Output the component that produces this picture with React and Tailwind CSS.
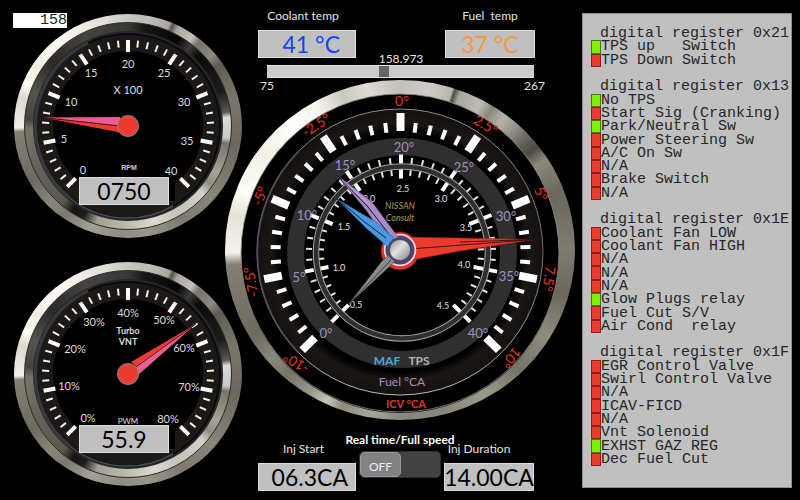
import React from "react";

const LATO = "font-['Lato','Open_Sans',sans-serif]";

const polar = (r, deg) => {
  const a = (deg * Math.PI) / 180;
  return [r * Math.sin(a), -r * Math.cos(a)];
};

/* Tick marks over a 270 degree sweep: 8 major steps, 5 minor divisions each. */
function Ticks({ cx = 0, cy = 0, major, minor, majorWidth, minorWidth, minorColor = "#f4f2ec" }) {
  const marks = [];
  for (let i = 0; i <= 40; i++) {
    const isMajor = i % 5 === 0;
    const [from, to] = isMajor ? major : minor;
    const deg = -135 + i * 6.75;
    const [x1, y1] = polar(from, deg);
    const [x2, y2] = polar(to, deg);
    marks.push(
      <line
        key={i}
        x1={cx + x1}
        y1={cy + y1}
        x2={cx + x2}
        y2={cy + y2}
        stroke={isMajor ? "#ffffff" : minorColor}
        strokeWidth={isMajor ? majorWidth : minorWidth}
      />
    );
  }
  return <g>{marks}</g>;
}

function Labels({ items, size, fill }) {
  return (
    <g fontSize={size} fill={fill} textAnchor="middle">
      {items.map(([text, x, y, turn]) => (
        <text key={text} transform={`translate(${x} ${y}) rotate(${turn || 0})`} y={size * 0.36}>
          {text}
        </text>
      ))}
    </g>
  );
}

function Readout({ label, value, className }) {
  return (
    <output
      aria-label={label}
      className={`flex h-7 items-center border border-[#dcdcdc] bg-[#c0c0c0] text-[23px] leading-none whitespace-nowrap ${className}`}
    >
      {value}
    </output>
  );
}

function SmallGauge({ name, value, labels, needle, children }) {
  return (
    <section aria-label={name} className="relative h-[224px] w-[228px]">
      <div className="h-full rounded-[50%] bg-[conic-gradient(#c9c7c1,#b9b6b0_16deg,#a9a6a0_22deg,#55524c_24deg,#aaa7a0_27deg,#c4c1ba_36deg,#77736b_40deg,#8e8a82_50deg,#605c54_56deg,#7a766c_75deg,#6b675d_100deg,#8a867b_130deg,#7e7a70_150deg,#99968b_170deg,#8f8c82_185deg,#a5a297_200deg,#7c786e_215deg,#8b877c_225deg,#6d695f_240deg,#858177_267deg,#f2f0e6_269deg,#dad7cc_285deg,#fffff6_292deg,#efede2_303deg,#fffff8_318deg,#f1efe6_332deg,#e0ded6_348deg,#c9c7c1)] px-[10px] py-2">
        <div className="h-full rounded-[50%] border border-[#2c2a26] bg-[conic-gradient(#3a3936,#161614_10deg,#050505_30deg,#3b3a37_38deg,#0b0b0a_45deg,#1d1c1a_70deg,#5b5953_82deg,#dcdcdc_85deg,#c6c6c6_97deg,#77746b_100deg,#a8a498_118deg,#8f8c82_125deg,#d4d2c8_132deg,#c5c2b7_150deg,#dddbd1_165deg,#bfbcb1_180deg,#a19e93_198deg,#1f1e1a_206deg,#14130f_213deg,#5a564c_220deg,#66625a_245deg,#77746a_268deg,#45433e_274deg,#55534d_290deg,#2b2a27_310deg,#45443f_335deg,#3a3936)] p-2">
          <div className="h-full rounded-[50%] border-2 border-[#26272b] bg-[#0c0b0b]" />
        </div>
      </div>
      <svg viewBox="-114 -112 228 224" className="absolute inset-0 h-full w-full" aria-hidden="true">
        <circle r="91" fill="#1d1917" />
        <path d="M-58 72A92 92 0 0 1 -40 -83" fill="none" stroke="#42434c" strokeWidth="3" opacity="0.8" />
        <path d="M-58 72A92 92 0 0 0 45 80" fill="none" stroke="#4a4b55" strokeWidth="1.5" />
        <circle r="75" fill="#000" />
        <rect x="30" y="53" width="17" height="22" fill="#000" />
        <Ticks major={[86, 74]} minor={[86, 79]} majorWidth="4" minorWidth="2" />
        <Labels items={labels} size={11} fill="#dedede" />
        {children}
        {needle}
        <circle r="10.5" fill="#e93b2e" stroke="#8d8d8d" strokeWidth="1" />
      </svg>
      <Readout
        label={name}
        value={value}
        className="absolute top-[163px] left-[65px] w-[90px] justify-center text-black"
      />
    </section>
  );
}

function MainDial() {
  return (
    <section
      aria-label="Injection dial"
      className="relative -mt-[13px] h-[340px] w-[350px] rounded-[50%] bg-[conic-gradient(#c3c1ba,#cfcdc6_10deg,#b8b6af_18deg,#4e4c46_19deg,#a9a69f_21deg,#bdbab2_29deg,#8a877f_33deg,#b5b2a9_38deg,#9c998f_42deg,#5d5a50_50deg,#4c493f_53deg,#8b887e_58deg,#6b675d_70deg,#7f7b70_90deg,#6b675c_105deg,#8f8b7f_120deg,#77736a_135deg,#9c998d_150deg,#88857a_165deg,#8b887d_180deg,#a8a599_190deg,#8e8b80_200deg,#c4c2ba_206deg,#9b988c_212deg,#77736a_222deg,#8b877c_230deg,#6d695f_240deg,#857f75_265deg,#f4f2ea_269deg,#e4e2d8_282deg,#fffff6_290deg,#f2f0e6_305deg,#fffff8_318deg,#f6f4ec_330deg,#c9c7bf_340deg,#dddbd4_348deg,#c3c1ba)] px-4 pt-[14px] pb-[7px]"
    >
      <div className="h-full rounded-[50%] bg-black" />
      <svg viewBox="-175 -170 350 340" className="absolute inset-0 h-full w-full" aria-hidden="true">
        <defs>
          <linearGradient id="rim" x1="0" y1="0" x2="0" y2="1">
            <stop offset="0" stopColor="#8b8b8b" />
            <stop offset="0.5" stopColor="#6d6d75" />
            <stop offset="1" stopColor="#b9b9c2" />
          </linearGradient>
          <radialGradient id="well">
            <stop offset="0.8" stopColor="#000" />
            <stop offset="0.86" stopColor="#0a0807" />
            <stop offset="0.9" stopColor="#1b1614" />
            <stop offset="1" stopColor="#15110f" />
          </radialGradient>
          <linearGradient id="cap" x1="0" y1="0" x2="1" y2="1">
            <stop offset="0" stopColor="#8d8d8d" />
            <stop offset="0.45" stopColor="#e2e2e2" />
            <stop offset="0.6" stopColor="#c4c4c4" />
            <stop offset="1" stopColor="#808080" />
          </linearGradient>
        </defs>
        <circle cy="3" r="159" fill="none" stroke="#8c8c86" strokeWidth="0.8" />
        <circle cy="2" r="143" fill="url(#well)" stroke="url(#rim)" strokeWidth="1" />
        <path d="M-101 -99A143 143 0 0 0 -101 103" fill="none" stroke="#4d4d57" strokeWidth="2" opacity="0.7" />
        <circle cx="1" cy="3" r="120" fill="#000" />
        <circle cx="2" cy="3" r="106.5" fill="none" stroke="#2f2f2f" strokeWidth="17" />
        <Ticks cx={0.5} cy={2} major={[139, 121]} minor={[130, 120]} majorWidth="8" minorWidth="4" minorColor="#fff" />
        <Ticks cx={1} cy={2.5} major={[98, 89]} minor={[95, 89]} majorWidth="4" minorWidth="2" minorColor="#e9e6d6" />
        <Ticks cx={1} cy={2.5} major={[84, 74]} minor={[83, 77]} majorWidth="4" minorWidth="2" minorColor="#e9e6d6" />
        <circle cx="2" cy="2.5" r="86" fill="none" stroke="#a5a5a5" strokeWidth="6.5" />
        <circle cx="2" cy="2.5" r="86" fill="none" stroke="#2f2f2f" strokeWidth="4.5" />
        <Labels
          size={14}
          fill="#e0352b"
          items={[
            ["0°", 2, -149],
            ["-2.5°", -84, -125, -33],
            ["2.5°", 86, -125, 30],
            ["-5°", -140, -54, -68],
            ["5°", 141, -56, 67],
            ["-7.5°", -149, 32, -100],
            ["7.5°", 149, 29, 98],
            ["-10°", -104, 113, -148],
            ["10°", 111, 108, 130],
          ]}
        />
        <Labels
          size={13}
          fill="#a18fbd"
          items={[
            ["0°", -74, 83],
            ["5°", -101, 27],
            ["10°", -93, -35],
            ["15°", -55, -85],
            ["20°", 4, -103],
            ["25°", 64, -83],
            ["30°", 106, -34],
            ["35°", 109, 26],
            ["40°", 78, 83],
          ]}
        />
        <Labels
          size={9}
          fill="#e2e2e2"
          items={[
            ["0.5", -44, 55],
            ["1.0", -61, 18],
            ["1.5", -56, -23],
            ["2.0", -31, -51],
            ["2.5", 3, -61],
            ["3.0", 41, -51],
            ["3.5", 66, -22],
            ["4.0", 64, 15],
            ["4.5", 43, 56],
          ]}
        />
        <g fontSize="9" fontStyle="italic" fill="#a89f63" textAnchor="middle">
          <text x="0" y="-41">NISSAN</text>
          <text x="0" y="-29">Consult</text>
        </g>
        <g textAnchor="middle" fontSize="12">
          <text x="-13" y="115" fontWeight="bold" fill="#45a9e6">MAF</text>
          <text x="19" y="115" fontWeight="bold" fill="#b4b4b4">TPS</text>
          <text x="2" y="136" fill="#a18fbd">Fuel °CA</text>
          <text x="6" y="158" fontWeight="bold" fontSize="11" fill="#e0352b">ICV °CA</text>
        </g>

        <circle r="19" cy="1" fill="#d8362c" stroke="#7a1713" strokeWidth="0.8" />
        <path d="M8 -13L60 -12L135 -10.5L60 1L12 10Z" fill="#e93b2e" stroke="#8e1c15" strokeWidth="0.6" />
        <path d="M16 -1.5L135 -10.5L60 -8" fill="none" stroke="#3a0a08" strokeWidth="0.9" />
        <circle r="15" fill="none" stroke="#f3dada" strokeWidth="2.5" />
        <circle r="13.5" fill="none" stroke="#5a3a7c" strokeWidth="2" />
        <path d="M-63 -75L-28 -48L-2 -13L-11 -7L-34 -40Z" fill="#a88cc4" stroke="#6a4f88" strokeWidth="0.6" />
        <path d="M-63 -75L-32 -43L-8 -12" fill="none" stroke="#1d1228" strokeWidth="1" />
        <path d="M-58 -70L-30 -45" stroke="#e3d8ee" strokeWidth="0.6" />
        <path d="M-63 -51L-24 -28L-6 -12L-12 -3L-34 -22Z" fill="#4a97e0" stroke="#245a94" strokeWidth="0.6" />
        <path d="M-63 -51L-34 -27L-14 -12" fill="none" stroke="#0a2440" strokeWidth="1" />
        <path d="M-52 55L-18 11L-10 4L-4 10L-11 17Z" fill="#8b8b8b" stroke="#454545" strokeWidth="0.6" />
        <path d="M-52 55L-9 10" stroke="#2b2b2b" strokeWidth="0.9" />
        <circle r="12.5" fill="#3b4668" />
        <circle r="10.5" fill="url(#cap)" stroke="#4b4b4b" strokeWidth="0.8" />
      </svg>
    </section>
  );
}

const REGISTERS = [
  {
    title: "digital register 0x21",
    bits: [["TPS up   Switch", 1], ["TPS Down Switch", 0]],
  },
  {
    title: "digital register 0x13",
    bits: [
      ["No TPS", 1],
      ["Start Sig (Cranking)", 0],
      ["Park/Neutral Sw", 1],
      ["Power Steering Sw", 0],
      ["A/C On Sw", 0],
      ["N/A", 0],
      ["Brake Switch", 0],
      ["N/A", 0],
    ],
  },
  {
    title: "digital register 0x1E",
    bits: [
      ["Coolant Fan LOW", 0],
      ["Coolant Fan HIGH", 0],
      ["N/A", 0],
      ["N/A", 0],
      ["N/A", 0],
      ["Glow Plugs relay", 1],
      ["Fuel Cut S/V", 0],
      ["Air Cond  relay", 0],
    ],
  },
  {
    title: "digital register 0x1F",
    bits: [
      ["EGR Control Valve", 0],
      ["Swirl Control Valve", 0],
      ["N/A", 0],
      ["ICAV-FICD", 0],
      ["N/A", 0],
      ["Vnt Solenoid", 0],
      ["EXHST GAZ REG", 1],
      ["Dec Fuel Cut", 0],
    ],
  },
];

function Registers() {
  return (
    <aside className="mt-[13px] mr-2 mb-3 ml-[7px] grid min-w-[210px] flex-1 auto-rows-fr border border-[#8f8f8f] bg-[#c0c0c0] pt-[13px] pb-[21px] pl-2 font-['Liberation_Mono',monospace] text-[15px] leading-[13px] whitespace-pre text-[#262626]">
      {REGISTERS.map((reg, i) => (
        <React.Fragment key={reg.title}>
          {i > 0 && <div />}
          <h2 className="flex items-center pl-[9px]">{reg.title}</h2>
          {reg.bits.map(([name, on], j) => (
            <div key={j} className="flex items-center">
              <span
                className={`w-[10px] shrink-0 self-stretch border ${
                  on ? "border-[#3f7d10] bg-[#80f000]" : "border-[#8e2019] bg-[#e93b2e]"
                }`}
              />
              <span>{name}</span>
            </div>
          ))}
        </React.Fragment>
      ))}
    </aside>
  );
}

export default function App() {
  return (
    <main className={`flex min-h-screen bg-black text-[12px] leading-4 text-[#e4e4e4] ${LATO}`}>
      <div className="relative flex shrink-0 flex-col gap-6 pt-[14px] pl-[14px]">
        <SmallGauge
          name="Engine speed"
          value="0750"
          labels={[
            ["0", -45, 44],
            ["5", -64, 13],
            ["10", -57, -24],
            ["15", -37, -53],
            ["20", 0, -62],
            ["25", 36, -53],
            ["30", 56, -24],
            ["35", 59, 15],
            ["40", 43, 45],
          ]}
          needle={
            <g>
              <path d="M-85 -8.5L-8 -9L-8 0Z" fill="#ee5c94" />
              <path d="M-85 -8.5L-8 0L-8 6.5Z" fill="#e93b2e" />
              <path d="M-85 -8.5L-8 0" stroke="#2c0709" strokeWidth="0.8" />
            </g>
          }
        >
          <text y="-32" fontSize="11" fill="#dedede" textAnchor="middle">X 100</text>
          <text x="1" y="44" fontSize="7" fontWeight="bold" fill="#d0d0d0" textAnchor="middle" fontFamily="Liberation Sans">RPM</text>
        </SmallGauge>
        <SmallGauge
          name="Turbo VNT"
          value="55.9"
          labels={[
            ["0%", -40, 44],
            ["10%", -59, 12],
            ["20%", -53, -25],
            ["30%", -34, -52],
            ["40%", 0, -61],
            ["50%", 36, -54],
            ["60%", 56, -26],
            ["70%", 61, 13],
            ["80%", 40, 45],
          ]}
          needle={
            <g>
              <path d="M68 -50L3 -12L10 -6Z" fill="#e93b2e" />
              <path d="M68 -50L8 -8L9 2Z" fill="#ee5c94" />
              <path d="M68 -50L8 -7" stroke="#2c0709" strokeWidth="0.8" />
            </g>
          }
        >
          <g fill="#dedede" textAnchor="middle">
            <text y="-40" fontSize="9" fontWeight="bold">Turbo</text>
            <text y="-29" fontSize="9" fontWeight="bold">VNT</text>
            <text y="50" fontSize="8">PWM</text>
          </g>
        </SmallGauge>
        <output
          aria-label="Sample rate"
          className="absolute top-[13px] left-[13px] h-[15px] w-[54px] bg-white text-right font-['Liberation_Mono',monospace] text-[15px] leading-[15px] text-[#1c1c1c]"
        >
          158
        </output>
      </div>

      <div className="relative -ml-[17px] w-[350px] shrink-0">
        <header className="relative z-10 pt-2 pr-10 pl-[33px]">
          <div className="flex justify-between">
            <div className="w-[98px]">
              <div className="pr-2 text-center">Coolant temp</div>
              <Readout label="Coolant temp" value="41 °C" className="mt-[6px] justify-end pr-[15px] text-[#0f48f2]" />
            </div>
            <div className="w-[90px]">
              <div className="text-center whitespace-pre">Fuel  temp</div>
              <Readout label="Fuel temp" value="37 °C" className="mt-[6px] justify-center text-[#f39b3e]" />
            </div>
          </div>
          <label htmlFor="timing" className="-mt-[6px] block pl-[9px] text-center leading-[13px]">
            158.973
          </label>
          <input
            id="timing"
            type="range"
            min="75"
            max="267"
            step="0.001"
            defaultValue="158.973"
            className="ml-[9px] block h-[13px] w-[267px] appearance-none border-y border-[#e2e2e2] bg-[#cbcbcb] [&::-webkit-slider-thumb]:h-[11px] [&::-webkit-slider-thumb]:w-[10px] [&::-webkit-slider-thumb]:appearance-none [&::-webkit-slider-thumb]:bg-[#666]"
          />
          <div className="-mr-[10px] ml-[2px] flex justify-between leading-[15px]">
            <span>75</span>
            <span>267</span>
          </div>
        </header>

        <MainDial />

        <footer className="flex gap-[3px] pt-[13px] pl-[33px]">
          <div className="w-[98px] pt-2">
            <div className="pr-[7px] text-center">Inj Start</div>
            <Readout label="Injection start" value="06.3CA" className="mt-[6px] justify-end pr-[7px] text-black" />
          </div>
          <div className="flex w-[82px] flex-col items-center">
            <label htmlFor="mode" className="leading-[14px] font-bold whitespace-nowrap text-white">
              Real time/Full speed
            </label>
            <button
              id="mode"
              type="button"
              role="switch"
              aria-checked="false"
              className="mt-1 flex h-[27px] w-full rounded-[5px] border border-[#2c2c2c] bg-[#434343]"
            >
              <span className="flex h-full w-[41px] items-center justify-center rounded-[5px] border border-[#999] bg-[#828282] pt-1 text-[#f0f0f0]">
                OFF
              </span>
            </button>
          </div>
          <div className="w-[90px] pt-2">
            <div className="pr-5 text-center whitespace-nowrap">Inj Duration</div>
            <Readout label="Injection duration" value="14.00CA" className="mt-[6px] justify-center text-black" />
          </div>
        </footer>
      </div>

      <Registers />
    </main>
  );
}
